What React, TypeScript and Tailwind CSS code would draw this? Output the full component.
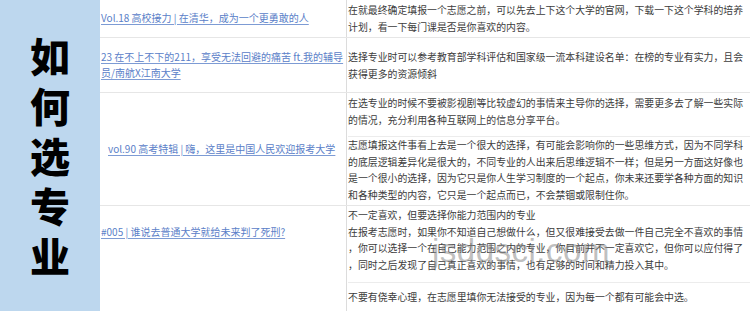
const FONT = "font-['Noto_Sans_CJK_SC','Noto_Sans',sans-serif]";

interface NoteBlock {
  lines: string[];
  className: string;
}

interface GuideRow {
  title: string[];
  titleClass: string;
  rowClass: string;
  notes: NoteBlock[];
}

const rows: GuideRow[] = [
  {
    title: ["Vol.18 高校接力 | 在清华，成为一个更勇敢的人"],
    titleClass: "items-center pl-[1px]",
    rowClass: "h-[38px]",
    notes: [
      {
        lines: [
          "在就最终确定填报一个志愿之前，可以先去上下这个大学的官网，下载一下这个学科的培养",
          "计划，看一下每门课是否是你喜欢的内容。"
        ],
        className: "flex-1 pt-[2px]"
      }
    ]
  },
  {
    title: ["23 在不上不下的211，享受无法回避的痛苦 ft.我的辅导", "员/南航X江南大学"],
    titleClass: "items-center pl-[1px]",
    rowClass: "h-[55px]",
    notes: [
      {
        lines: [
          "选择专业时可以参考教育部学科评估和国家级一流本科建设名单：在榜的专业有实力，且会",
          "获得更多的资源倾斜"
        ],
        className: "flex-1 pt-[11px]"
      }
    ]
  },
  {
    title: ["vol.90 高考特辑 | 嗨，这里是中国人民欢迎报考大学"],
    titleClass: "items-center pl-[8px]",
    rowClass: "h-[113px]",
    notes: [
      {
        lines: [
          "在选专业的时候不要被影视剧等比较虚幻的事情来主导你的选择，需要更多去了解一些实际",
          "的情况，充分利用各种互联网上的信息分享平台。"
        ],
        className: "h-[44px] pt-[2px] border-b border-[#ececec]"
      },
      {
        lines: [
          "志愿填报这件事看上去是一个很大的选择，有可能会影响你的一些思维方式，因为不同学科",
          "的底层逻辑差异化是很大的，不同专业的人出来后思维逻辑不一样；但是另一方面这好像也",
          "是一个很小的选择，因为它只是你人生学习制度的一个起点，你未来还要学各种方面的知识",
          "和各种类型的内容，它只是一个起点而已，不会禁锢或限制住你。"
        ],
        className: "flex-1 pt-0"
      }
    ]
  },
  {
    title: ["#005 | 谁说去普通大学就给未来判了死刑?"],
    titleClass: "items-start pt-[18px] pl-[1px]",
    rowClass: "flex-1",
    notes: [
      {
        lines: [
          "不一定喜欢，但要选择你能力范围内的专业",
          "在报考志愿时，如果你不知道自己想做什么，但又很难接受去做一件自己完全不喜欢的事情",
          "，你可以选择一个在自己能力范围之内的专业，你目前并不一定喜欢它，但你可以应付得了",
          "，同时之后发现了自己真正喜欢的事情，也有足够的时间和精力投入其中。"
        ],
        className: "h-[77px] pt-[1px] border-b border-[#ececec]"
      },
      {
        lines: ["不要有侥幸心理，在志愿里填你无法接受的专业，因为每一个都有可能会中选。"],
        className: "flex-1 pt-[6px]"
      }
    ]
  }
];

export default function App(): JSX.Element {
  return (
    <div className={`relative flex h-[311px] w-[750px] overflow-hidden bg-white ${FONT}`}>
      <aside className="flex w-[100px] shrink-0 flex-col items-center justify-center bg-[#bdd7ee] pb-[2px]">
        {"如何选专业".split("").map((ch) => (
          <span
            key={ch}
            className="text-[40px] font-black leading-[50px] text-black"
          >
            {ch}
          </span>
        ))}
      </aside>

      <div className="flex flex-1 flex-col">
        {rows.map((row, i) => (
          <div
            key={i}
            className={`flex ${row.rowClass} ${
              i < rows.length - 1 ? "border-b border-[#e6e6e6]" : ""
            }`}
          >
            <div className={`flex w-[246px] shrink-0 ${row.titleClass}`}>
              <a className="text-[10px] leading-[16.5px] text-[#5a80c8] underline decoration-[#7d9bd4] underline-offset-2">
                {row.title.map((line) => (
                  <span key={line} className="block whitespace-nowrap">
                    {line}
                  </span>
                ))}
              </a>
            </div>
            <div className="flex flex-1 flex-col border-l border-[#dcdcdc] pl-[1px]">
              {row.notes.map((note, j) => (
                <div key={j} className={note.className}>
                  {note.lines.map((line) => (
                    <p
                      key={line}
                      className="whitespace-nowrap text-[9.9px] leading-[16.5px] text-[#3c3c3c]"
                    >
                      {line}
                    </p>
                  ))}
                </div>
              ))}
            </div>
          </div>
        ))}
      </div>

      {/* site watermark sitting over the table */}
      <span className="pointer-events-none absolute left-[432px] top-[234px] font-['Liberation_Sans',sans-serif] text-[33px] leading-none tracking-[0.5px] text-[#8a8a8a]/55">
        jsdqsci.com
      </span>
    </div>
  );
}
